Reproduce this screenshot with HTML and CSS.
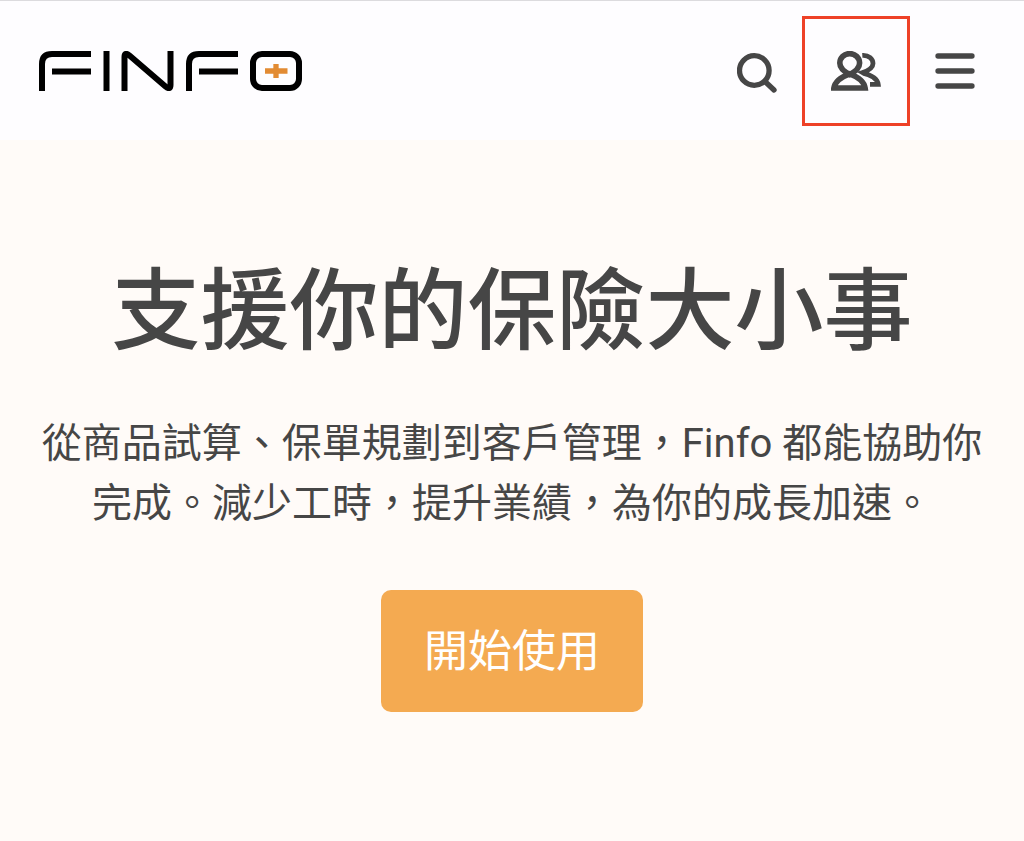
FILE: index.html
```html
<!DOCTYPE html>
<html lang="zh-Hant">
<head>
    <meta charset="UTF-8">
    <meta name="viewport" content="width=device-width, initial-scale=1.0">
    <title>Finfo</title>
    <link rel="stylesheet" href="styles.css">
</head>
<body>
    <header class="header">
        <a href="#" class="logo" aria-label="Finfo">
            <svg width="263" height="40" viewBox="0 0 263 40" fill="none" stroke="#000" stroke-width="6">
                <path d="M3 40V13Q3 3 13 3H52M13 20.5H52"/>
                <path d="M67.5 0V40"/>
                <path d="M85.5 40V6Q85.5 0.5 90.5 4.5L126.5 35.5Q131.5 39.5 131.5 34V0"/>
                <path d="M150 40V13Q150 3 160 3H199M160 20.5H199"/>
                <rect x="214" y="3" width="46" height="34" rx="9"/>
                <path d="M226 20H248.5M237 13V27" stroke="#e28b33" stroke-width="5.3"/>
            </svg>
        </a>
        <nav class="nav">
            <button type="button" class="icon-btn" aria-label="搜尋">
                <svg width="40" height="44" viewBox="0 0 40 44" fill="none" stroke="#464646" stroke-width="5.3">
                    <circle cx="17.3" cy="21.5" r="14.8"/>
                    <path d="M28 32.5L37 41" stroke-linecap="round"/>
                </svg>
            </button>
            <button type="button" class="icon-btn highlight" aria-label="會員">
                <svg width="50" height="40" viewBox="0 0 50 40" fill="none" stroke="#464646" stroke-width="5.6">
                    <path d="M31.3 4.4C38 4 42 8 42 12.5C42 17 38 19.5 31 21.8C41 24 46.5 28 47.2 33.3H39" stroke-width="4.8"/>
                    <!-- gap between the two people -->
                    <path d="M2.9 37H34.1C33 29.5 26 25.5 18.7 22.8" stroke="#fefdff" stroke-width="9"/>
                    <path d="M18.7 23.5C12 20 8.8 16.5 8.8 12A9.9 9.4 0 0 1 28.6 12C28.6 16.5 25.4 20 18.7 23.5Z"/>
                    <path d="M2.9 37H34.1C33 29.5 26 25.5 18.7 22.8C11.4 25.5 4 29.5 2.9 37Z"/>
                </svg>
            </button>
            <button type="button" class="icon-btn" aria-label="選單">
                <svg width="40" height="36" viewBox="0 0 40 36" fill="none" stroke="#464646" stroke-width="5.3" stroke-linecap="round">
                    <path d="M3 3H37M3 18H37M3 33H37"/>
                </svg>
            </button>
        </nav>
    </header>

    <main class="hero">
        <h1 class="title">支援你的保險大小事</h1>
        <p class="desc">從商品試算、保單規劃到客戶管理，Finfo 都能協助你完成。減少工時，提升業績，為你的成長加速。</p>
        <button type="button" class="start-btn">開始使用</button>
    </main>
</body>
</html>
```
FILE: styles.css
```css
* {
    box-sizing: border-box;
}
body {
    margin: 0;
    min-height: 100vh;
    background-color: #fffbf8;
    color: #464646;
    font-family: Roboto, "Noto Sans CJK TC", sans-serif;
}
.header {
    display: flex;
    align-items: center;
    justify-content: space-between;
    height: 140px;
    padding: 0 49px 0 39px;
    border-top: 1px solid #dcdbde;
    background-color: #fefdff;
}
.logo svg, .icon-btn svg {
    display: block;
}
.nav {
    display: flex;
    align-items: center;
    gap: 25px;
}
.icon-btn {
    padding: 0;
    border: none;
    background: none;
    cursor: pointer;
}
.highlight {
    padding: 32px 26px;
    border: 3px solid #ee4127;
}
.hero {
    padding: 114px 40px;
    text-align: center;
}
.title {
    margin: 0 0 44px;
    font-size: 89px;
    font-weight: 500;
    line-height: 116px;
}
.desc {
    margin: 0 0 56px;
    font-size: 40px;
    line-height: 60px;
}
.start-btn {
    padding: 29px 43px 27px;
    border: none;
    border-radius: 10px;
    background-color: #f4aa51;
    color: #fff;
    font-family: inherit;
    font-size: 44px;
    line-height: 66px;
    cursor: pointer;
}
```
